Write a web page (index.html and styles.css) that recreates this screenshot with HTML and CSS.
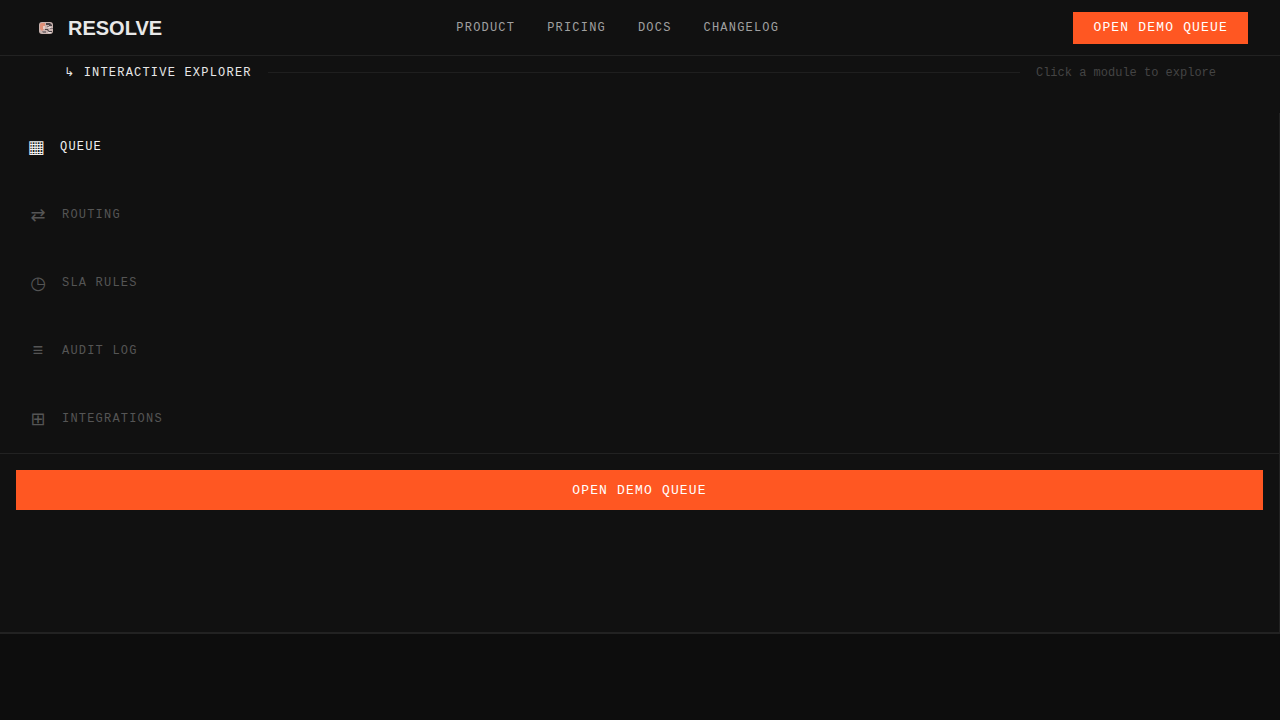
FILE: index.html
```html
<!DOCTYPE html>
<html lang="en">
<head>
    <meta charset="UTF-8">
    <meta name="viewport" content="width=device-width, initial-scale=1.0">
    <title>Resolve</title>
    <link rel="stylesheet" href="styles.css">
</head>
<body>
    <header class="topbar">
        <a href="#" class="brand">
            <svg class="brand-mark" viewBox="0 0 14 14" aria-hidden="true">
                <rect y="1" width="14" height="12" rx="3" fill="#c9b3af"/>
                <path d="M1 4Q1 2 3 2H6V7L3 10L1 8Z" fill="#e09078"/>
                <path d="M4 5H6V8H4Z" fill="#e6cdc5"/>
                <path d="M7 2H11L13 4V5H10V4H7ZM6 8H9L10 10H13V11H10L8 9H6Z" fill="#4a4346"/>
                <path d="M8 5H10V6H8ZM3 10H7V12H4ZM11 7H14V8H11Z" fill="#85787a"/>
                <path d="M9 6H12V7H9ZM9 11H12V12H9Z" fill="#e4dcdb"/>
            </svg>
            <span>RESOLVE</span>
        </a>
        <nav class="nav">
            <a href="#product">PRODUCT</a>
            <a href="#pricing">PRICING</a>
            <a href="#docs">DOCS</a>
            <a href="#changelog">CHANGELOG</a>
        </nav>
        <button type="button" class="btn">OPEN DEMO QUEUE</button>
    </header>

    <main class="explorer" id="product">
        <div class="explorer-head">
            <h2>↳ INTERACTIVE EXPLORER</h2>
            <span class="rule"></span>
            <p>Click a module to explore</p>
        </div>

        <div class="explorer-body">
            <div class="modules">
                <button type="button" class="module active"><span class="icon">▦</span>QUEUE</button>
                <button type="button" class="module"><span class="icon">⇄</span>ROUTING</button>
                <button type="button" class="module"><span class="icon">◷</span>SLA RULES</button>
                <button type="button" class="module"><span class="icon">≡</span>AUDIT LOG</button>
                <button type="button" class="module"><span class="icon">⊞</span>INTEGRATIONS</button>
            </div>

            <div class="explorer-cta">
                <button type="button" class="btn btn-wide">OPEN DEMO QUEUE</button>
            </div>
        </div>
    </main>
</body>
</html>
```

FILE: styles.css
```css
* {
    margin: 0;
    padding: 0;
    box-sizing: border-box;
}

body {
    background: #0d0d0d;
    color: #e8e8e8;
    font-family: "Liberation Mono", "DejaVu Sans", monospace;
    font-size: 12px;
    line-height: 16px;
}

button {
    border: none;
    font-family: inherit;
    cursor: pointer;
}

a {
    color: inherit;
    text-decoration: none;
}

/* Top bar */
.topbar {
    display: flex;
    align-items: center;
    justify-content: space-between;
    height: 56px;
    padding: 0 32px;
    background: #111;
    border-bottom: 1px solid #222;
}

.brand {
    display: flex;
    align-items: center;
    gap: 15px;
    padding-left: 7px;
    font-family: "Liberation Sans", Arial, sans-serif;
    font-size: 20px;
    font-weight: bold;
    line-height: 24px;
}

.brand-mark {
    width: 14px;
    height: 14px;
}

.nav {
    display: flex;
    gap: 32px;
    color: #a0a0a0;
    letter-spacing: 0.1em;
}

.nav a:hover {
    color: #e8e8e8;
}

.btn {
    height: 32px;
    padding: 0 20px;
    background: #ff5722;
    color: #fff;
    font-size: 13px;
    letter-spacing: 0.09em;
}

.btn:hover {
    background: #ff6a3a;
}

/* Explorer */
.explorer {
    background: #111;
    border-bottom: 2px solid #222;
}

.explorer-head {
    display: flex;
    align-items: center;
    gap: 16px;
    height: 57px;
    padding: 0 64px 24px;
}

.explorer-head h2 {
    font-size: 12px;
    font-weight: normal;
    letter-spacing: 0.1em;
}

.explorer-head p {
    color: #444;
}

.rule {
    flex: 1;
    height: 1px;
    background: #1f1f1f;
}

.explorer-body {
    padding-bottom: 106px;
    border-right: 1px solid #222;
}

.modules {
    border-bottom: 1px solid #222;
}

.module {
    display: flex;
    align-items: center;
    gap: 12px;
    width: 100%;
    height: 68px;
    padding: 0 26px;
    background: none;
    color: #555;
    font-size: 12px;
    letter-spacing: 0.1em;
    text-align: left;
}

.module.active {
    padding-left: 24px;
    color: #f0f0f0;
}

.icon {
    width: 24px;
    font-size: 18px;
    letter-spacing: 0;
    text-align: center;
}

.explorer-cta {
    padding: 16px;
}

.btn-wide {
    width: 100%;
    height: 40px;
}
```
